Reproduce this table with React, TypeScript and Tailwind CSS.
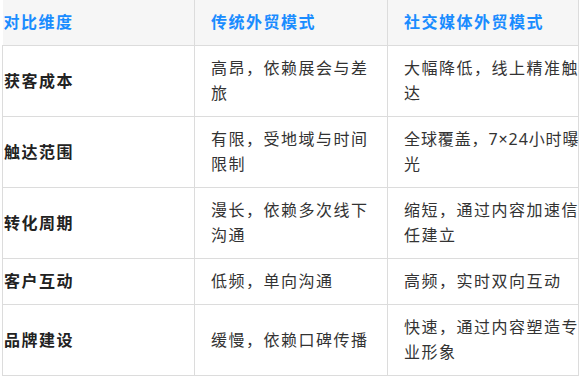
const ROWS = [
  { dim: "获客成本", trad: "高昂，依赖展会与差旅", social: "大幅降低，线上精准触达", tight: false },
  { dim: "触达范围", trad: "有限，受地域与时间限制", social: "全球覆盖，7×24小时曝光", tight: true },
  { dim: "转化周期", trad: "漫长，依赖多次线下沟通", social: "缩短，通过内容加速信任建立", tight: false },
  { dim: "客户互动", trad: "低频，单向沟通", social: "高频，实时双向互动", tight: false },
  { dim: "品牌建设", trad: "缓慢，依赖口碑传播", social: "快速，通过内容塑造专业形象", tight: false },
];

export default function App() {
  return (
    <div
      className="w-[585px] h-[378px] overflow-hidden bg-white"
      style={{ fontFamily: '"Noto Sans", "Noto Sans CJK SC", sans-serif' }}
    >
      <table className="ml-[2px] w-[576px] table-fixed border-collapse text-[16px] leading-[25px] tracking-[1.5px] text-[#333]">
        <colgroup>
          <col className="w-[192px]" />
          <col className="w-[193px]" />
          <col className="w-[191px]" />
        </colgroup>
        <thead>
          <tr className="bg-[#f6f6f6]">
            <th className="border-b border-r border-[#dcdcdc] py-[10px] pl-[1px] pr-4 text-left font-bold text-[#1a8cff]">
              对比维度
            </th>
            <th className="border-b border-r border-[#dcdcdc] py-[10px] pl-4 pr-4 text-left font-bold text-[#1a8cff]">
              传统外贸模式
            </th>
            <th className="border-b border-r border-[#dcdcdc] py-[10px] pl-4 pr-0 text-left font-bold text-[#1a8cff]">
              社交媒体外贸模式
            </th>
          </tr>
        </thead>
        <tbody>
          {ROWS.map((r) => (
            <tr key={r.dim}>
              <td className="border-b border-l border-r border-[#dcdcdc] py-[10px] pl-[1px] pr-4 align-middle font-bold text-[#222]">
                {r.dim}
              </td>
              <td className="border-b border-r border-[#dcdcdc] py-[10px] pl-4 pr-4 align-middle">{r.trad}</td>
              <td className="border-b border-r border-[#dcdcdc] py-[10px] pl-4 pr-0 align-middle">
                <div className={r.tight ? "-mr-[4px] tracking-[0.9px]" : "-mr-[4px]"}>{r.social}</div>
              </td>
            </tr>
          ))}
        </tbody>
      </table>
    </div>
  );
}
